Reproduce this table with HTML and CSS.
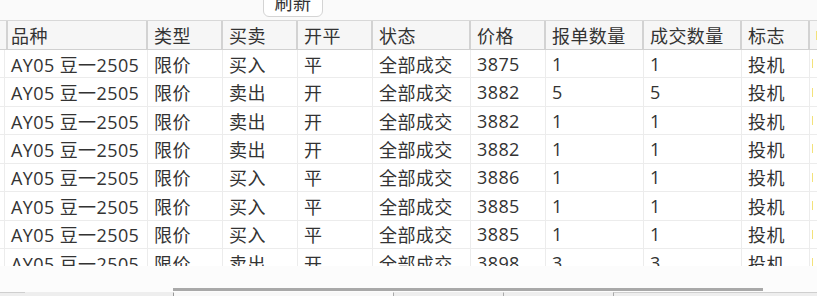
FILE: index.html
```html
<!DOCTYPE html>
<html lang="zh">
<head>
<meta charset="utf-8">
<link rel="stylesheet" href="styles.css">
</head>
<body>
<div class="toolbar"><button class="refresh">刷新</button></div>
<div class="grid">
  <div class="row head">
    <div class="c c0"></div><div class="c">品种</div><div class="c">类型</div><div class="c">买卖</div><div class="c">开平</div><div class="c">状态</div><div class="c">价格</div><div class="c">报单数量</div><div class="c">成交数量</div><div class="c">标志</div><div class="c cx"><span class="mark"></span></div>
  </div>
  <div class="body">
    <div class="row"><div class="c c0"></div><div class="c">AY05 豆一2505</div><div class="c">限价</div><div class="c">买入</div><div class="c">平</div><div class="c">全部成交</div><div class="c">3875</div><div class="c">1</div><div class="c">1</div><div class="c">投机</div><div class="c cx"><span class="mark"></span></div></div>
    <div class="row"><div class="c c0"></div><div class="c">AY05 豆一2505</div><div class="c">限价</div><div class="c">卖出</div><div class="c">开</div><div class="c">全部成交</div><div class="c">3882</div><div class="c">5</div><div class="c">5</div><div class="c">投机</div><div class="c cx"><span class="mark"></span></div></div>
    <div class="row"><div class="c c0"></div><div class="c">AY05 豆一2505</div><div class="c">限价</div><div class="c">卖出</div><div class="c">开</div><div class="c">全部成交</div><div class="c">3882</div><div class="c">1</div><div class="c">1</div><div class="c">投机</div><div class="c cx"><span class="mark"></span></div></div>
    <div class="row"><div class="c c0"></div><div class="c">AY05 豆一2505</div><div class="c">限价</div><div class="c">卖出</div><div class="c">开</div><div class="c">全部成交</div><div class="c">3882</div><div class="c">1</div><div class="c">1</div><div class="c">投机</div><div class="c cx"><span class="mark"></span></div></div>
    <div class="row"><div class="c c0"></div><div class="c">AY05 豆一2505</div><div class="c">限价</div><div class="c">买入</div><div class="c">平</div><div class="c">全部成交</div><div class="c">3886</div><div class="c">1</div><div class="c">1</div><div class="c">投机</div><div class="c cx"><span class="mark"></span></div></div>
    <div class="row"><div class="c c0"></div><div class="c">AY05 豆一2505</div><div class="c">限价</div><div class="c">买入</div><div class="c">平</div><div class="c">全部成交</div><div class="c">3885</div><div class="c">1</div><div class="c">1</div><div class="c">投机</div><div class="c cx"><span class="mark"></span></div></div>
    <div class="row"><div class="c c0"></div><div class="c">AY05 豆一2505</div><div class="c">限价</div><div class="c">买入</div><div class="c">平</div><div class="c">全部成交</div><div class="c">3885</div><div class="c">1</div><div class="c">1</div><div class="c">投机</div><div class="c cx"><span class="mark"></span></div></div>
    <div class="row"><div class="c c0"></div><div class="c">AY05 豆一2505</div><div class="c">限价</div><div class="c">卖出</div><div class="c">开</div><div class="c">全部成交</div><div class="c">3898</div><div class="c">3</div><div class="c">3</div><div class="c">投机</div><div class="c cx"><span class="mark"></span></div></div>
  </div>
</div>
<div class="gap"></div>
<div class="hscroll"><div class="thumb"></div></div>
<div class="tabs">
  <div class="tab t1"></div><div class="tab t2"></div><div class="tab t3"></div><div class="tab t4"></div><div class="tab t5"></div><div class="tab t6"></div>
</div>
</body>
</html>
```
FILE: styles.css
```css
html, body {
  margin: 0;
  padding: 0;
  background: #fafafa;
  width: 817px;
  height: 296px;
  overflow: hidden;
  font-family: "Open Sans", "Noto Sans CJK SC", sans-serif;
  font-size: 18px;
  letter-spacing: 0.4px;
  color: #333;
}
.toolbar {
  height: 20px;
  display: flex;
}
.refresh {
  margin: -11px 0 0 263px;
  width: 60px;
  height: 28px;
  padding: 0;
  background: #fff;
  border: 1px solid #d4d4d4;
  border-radius: 6px;
  font: inherit;
  letter-spacing: inherit;
  color: #333;
  line-height: 26px;
  text-align: center;
}
.grid {
  border-top: 1px solid #d8d8d8;
}
.row {
  display: grid;
  grid-template-columns: 5px 143px 75px 75px 75px 98px 75px 98px 98px 68px 1fr;
  height: 28.43px;
  box-sizing: border-box;
  border-bottom: 1px solid #ececec;
  background: #fff;
}
.row.head {
  height: 29px;
  background: #f6f6f6;
  border-bottom: 1px solid #d0d0d0;
}
.c {
  box-sizing: border-box;
  border-right: 1px solid #ececec;
  padding-left: 6px;
  display: flex;
  align-items: center;
  white-space: nowrap;
  overflow: hidden;
}
.head .c {
  border-right: 2px solid #d2d2d2;
  padding-left: 6px;
}
.c0 { padding-left: 0; }
.cx { border-right: none; padding-left: 2px; }
.head .cx { border-right: none; }
.mark {
  width: 1px;
  height: 9px;
  background: #f3e27a;
}
.body {
  height: 216px;
  overflow: hidden;
}
.gap {
  height: 22px;
  background: #fcfcfc;
}
.hscroll {
  height: 4px;
  background: #fcfcfc;
}
.thumb {
  margin-left: 173px;
  width: 590px;
  height: 3px;
  background: #a9a9a9;
}
.tabs {
  height: 4px;
  display: flex;
  background: #fcfcfc;
}
.tab {
  box-sizing: border-box;
  height: 4px;
  background: #eeeeee;
  border-top: 1px solid #cfcfcf;
}
.t1 { width: 25px; }
.t2 { width: 148px; border-top-color: #eee; }
.t3 { width: 220px; border-left: 1px solid #999; background: #f8f8f8; border-top-color: #f8f8f8; }
.t4 { width: 110px; border-left: 1px solid #aaa; border-top-color: #eee; }
.t5 { width: 110px; border-left: 1px solid #aaa; border-top-color: #eee; }
.t6 { flex: 1; border-left: 1px solid #aaa; }
```
